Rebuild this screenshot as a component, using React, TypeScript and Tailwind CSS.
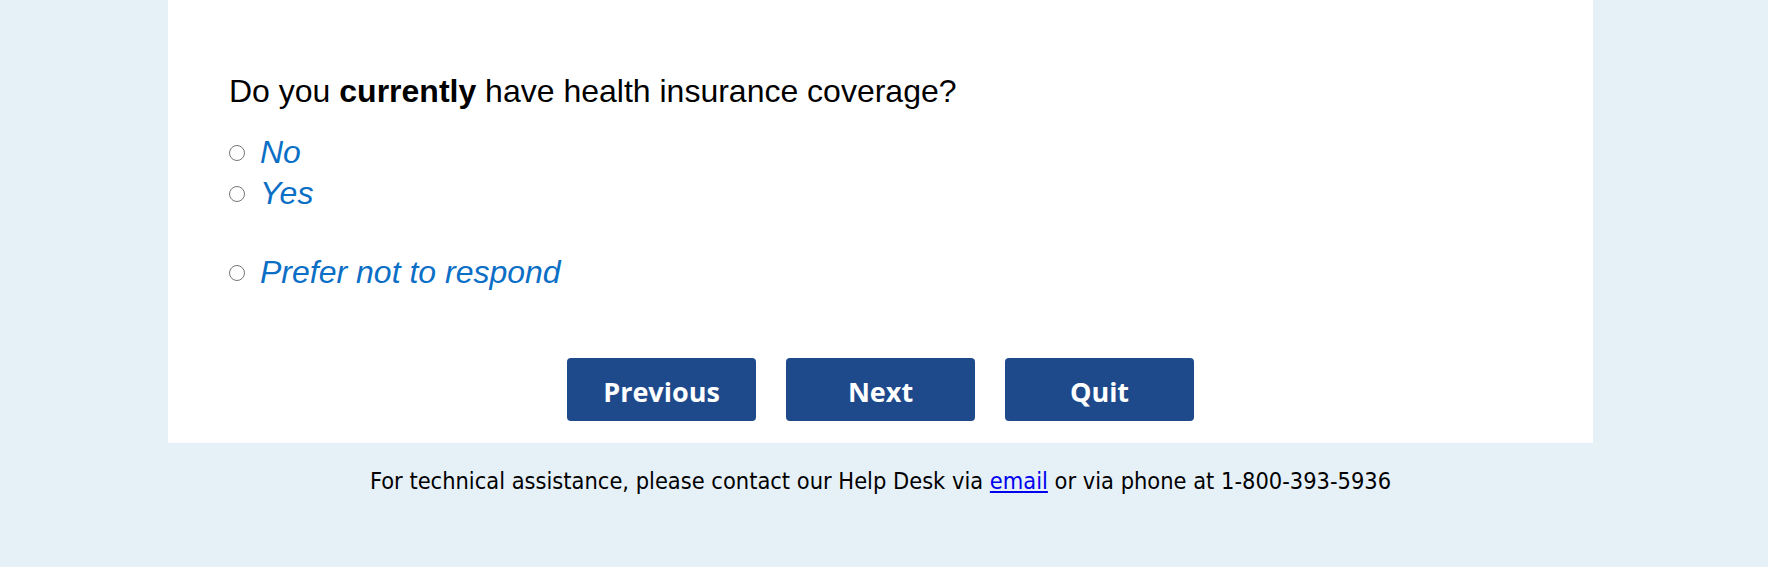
const OPTIONS = ["No", "Yes"];

function Radio({ label, className }: { label: string; className?: string }) {
  return (
    <label className={"flex items-center h-[41px] " + (className ?? "")}>
      <input
        type="radio"
        name="coverage"
        className="appearance-none w-[16px] h-[16px] m-0 rounded-full border-[1.5px] border-[#767676] bg-white mt-[2px]"
      />
      <span className="ml-[15px] text-[32px] italic text-[#0b6fc6]">{label}</span>
    </label>
  );
}

function NavButton({ label }: { label: string }) {
  return (
    <button className="w-[189px] h-[63px] pt-[5px] rounded-[4px] bg-[#1e4a8c] text-white text-[27px] font-bold font-['Open_Sans',sans-serif]">
      {label}
    </button>
  );
}

export default function App() {
  return (
    <div className="min-h-[567px] bg-[#e6f1f7] font-['Liberation_Sans',Arial,sans-serif]">
      <div className="ml-[168px] w-[1425px] bg-white pt-[74px] pb-[22px] pl-[61px]">
        <p className="text-[32px] leading-[34px] text-black">
          Do you <b>currently</b> have health insurance coverage?
        </p>
        <div className="mt-[23px]">
          {OPTIONS.map((o) => (
            <Radio key={o} label={o} />
          ))}
          <Radio label="Prefer not to respond" className="mt-[38px]" />
        </div>
        <div className="mt-[66px] -ml-[61px] flex justify-center gap-[30px]">
          <NavButton label="Previous" />
          <NavButton label="Next" />
          <NavButton label="Quit" />
        </div>
      </div>
      <p className="ml-[168px] w-[1425px] pt-[21px] text-center text-[23.4px] text-black font-['DejaVu_Sans_Condensed','DejaVu_Sans',sans-serif]">
        For technical assistance, please contact our Help Desk via{" "}
        <a href="#" className="text-[#0000ee] underline">
          email
        </a>{" "}
        or via phone at 1-800-393-5936
      </p>
    </div>
  );
}
